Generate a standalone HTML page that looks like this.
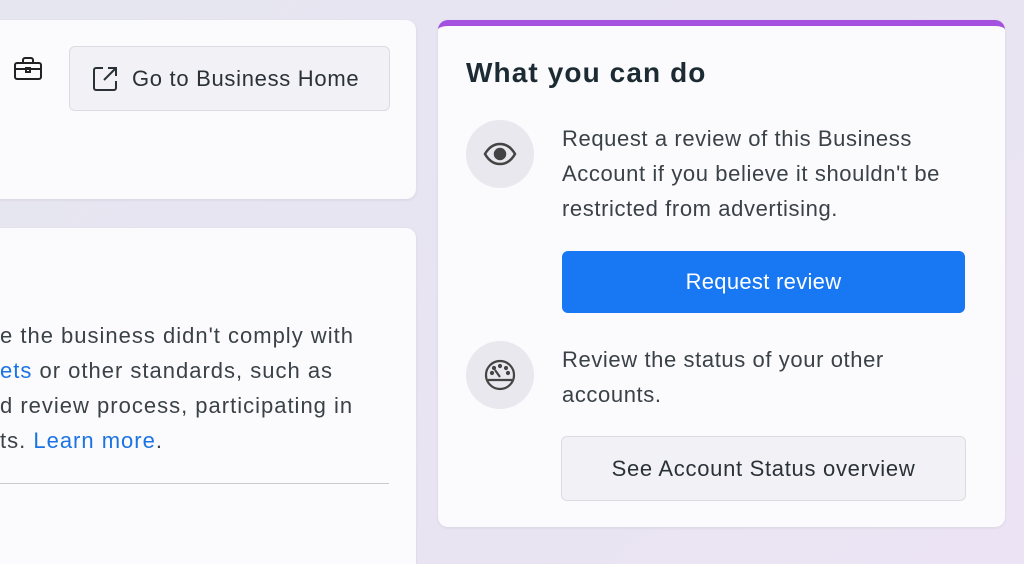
<!DOCTYPE html>
<html><head><style>
html,body{margin:0;width:1024px;height:564px;overflow:hidden}
body{background:linear-gradient(135deg,#e6e6f0,#e8e4f2 60%,#ece4f4);font-family:"Liberation Sans",sans-serif;color:#1c2b33;position:relative}
.card{position:absolute;background:#fbfafc;border-radius:10px;box-shadow:0 1px 3px rgba(0,0,0,.08)}
.btn{position:absolute;border:1px solid #dcdbe3;background:#f2f1f6;border-radius:6px;font-size:22px;color:#2a3238;display:flex;align-items:center;justify-content:center;letter-spacing:0.7px}
.txt{position:absolute;font-size:22px;line-height:35px;color:#3a4248;white-space:nowrap;letter-spacing:0.6px}
a{color:#1b74e4;text-decoration:none}
.ic{position:absolute;width:68px;height:68px;border-radius:50%;background:#e9e8ee;display:flex;align-items:center;justify-content:center}
</style></head><body>
<div class="card" style="left:-10px;top:20px;width:426px;height:179px"></div>
<svg style="position:absolute;left:14px;top:57px" width="28" height="24" viewBox="0 0 28 24" fill="none" stroke="#222" stroke-width="2"><rect x="1" y="6" width="26" height="16" rx="2"/><path d="M9 6V3a2 2 0 0 1 2-2h6a2 2 0 0 1 2 2v3M1 12h26"/><rect x="12" y="11" width="4" height="4"/></svg>
<div class="btn" style="left:69px;top:46px;width:319px;height:63px;justify-content:flex-start"><svg style="margin-left:22px;margin-right:14px" width="26" height="26" viewBox="0 0 26 26" fill="none" stroke="#2a3238" stroke-width="2"><path d="M11 2H4a2 2 0 0 0-2 2v18a2 2 0 0 0 2 2h18a2 2 0 0 0 2-2v-7M12 14L24 2M16 2h8v8"/></svg>Go to Business Home</div>
<div class="card" style="left:-10px;top:228px;width:426px;height:360px"></div>
<div class="txt" style="left:0;top:318px;letter-spacing:1px">e the business didn't comply with<br><a>ets</a> or other standards, such as<br>d review process, participating in<br>ts. <a>Learn more</a>.</div>
<div style="position:absolute;left:0;top:483px;width:389px;height:1px;background:#c8c8cf"></div>
<div class="card" style="left:438px;top:20px;width:567px;height:507px;border-top:6px solid #a450e0;box-sizing:border-box"></div>
<div style="position:absolute;left:466px;top:57px;font-size:28px;font-weight:bold;color:#1c2b33;letter-spacing:1.1px">What you can do</div>
<div class="ic" style="left:466px;top:120px"><svg width="34" height="24" viewBox="0 0 34 24" fill="none" stroke="#444" stroke-width="2.5"><path d="M2 12C6 5 11 2 17 2s11 3 15 10c-4 7-9 10-15 10S6 19 2 12z"/><circle cx="17" cy="12" r="5" fill="#444"/></svg></div>
<div class="txt" style="left:562px;top:121px">Request a review of this Business<br>Account if you believe it shouldn't be<br>restricted from advertising.</div>
<div style="position:absolute;left:562px;top:251px;width:403px;height:62px;background:#1877f2;border-radius:6px;color:#fff;font-size:22px;display:flex;align-items:center;justify-content:center;letter-spacing:0.3px">Request review</div>
<div class="ic" style="left:466px;top:341px"><svg width="34" height="34" viewBox="0 0 34 34" fill="none" stroke="#444" stroke-width="2.2"><circle cx="17" cy="17" r="14"/><path d="M5 22h24M17 19L12 12"/><circle cx="9" cy="15" r="1" fill="#444"/><circle cx="11" cy="10" r="1" fill="#444"/><circle cx="17" cy="8" r="1" fill="#444"/><circle cx="23" cy="10" r="1" fill="#444"/><circle cx="25" cy="15" r="1" fill="#444"/></svg></div>
<div class="txt" style="left:562px;top:342px">Review the status of your other<br>accounts.</div>
<div class="btn" style="left:561px;top:436px;width:403px;height:63px">See Account Status overview</div>
</body></html>
